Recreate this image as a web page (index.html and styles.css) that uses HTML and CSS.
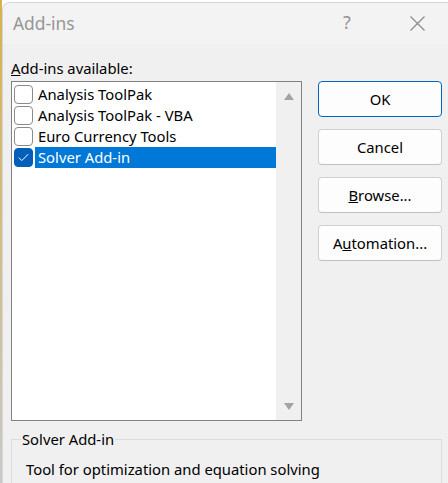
FILE: index.html
```html
<!DOCTYPE html>
<html lang="en">
<head>
    <meta charset="UTF-8">
    <meta name="viewport" content="width=device-width, initial-scale=1.0">
    <title>Add-ins</title>
    <link rel="stylesheet" href="styles.css">
</head>
<body>
    <div class="sheet-strip"></div>
    <div class="dialog">
        <div class="titlebar">
            <span class="title">Add-ins</span>
            <span class="caption-btn help">?</span>
            <span class="caption-btn close">
                <svg width="15" height="15" viewBox="0 0 15 15">
                    <path d="M0.5 0.5 L14.5 14.5 M14.5 0.5 L0.5 14.5" stroke="#8a8a8a" stroke-width="1.2" fill="none"/>
                </svg>
            </span>
        </div>

        <div class="content">
            <div class="main-row">
                <div class="list-column">
                    <label class="list-label"><u>A</u>dd-ins available:</label>
                    <div class="listbox">
                        <ul class="items">
                            <li class="item">
                                <span class="checkbox"></span>
                                <span class="item-text">Analysis ToolPak</span>
                            </li>
                            <li class="item">
                                <span class="checkbox"></span>
                                <span class="item-text">Analysis ToolPak - VBA</span>
                            </li>
                            <li class="item">
                                <span class="checkbox"></span>
                                <span class="item-text">Euro Currency Tools</span>
                            </li>
                            <li class="item selected">
                                <span class="checkbox checked">
                                    <svg width="11" height="9" viewBox="0 0 11 9">
                                        <path d="M0.8 4.6 L3.8 7.6 L10.2 1.2" stroke="#ffffff" stroke-width="1" fill="none"/>
                                    </svg>
                                </span>
                                <span class="item-text">Solver Add-in</span>
                            </li>
                        </ul>
                        <div class="scrollbar">
                            <span class="arrow up"></span>
                            <span class="arrow down"></span>
                        </div>
                    </div>
                </div>

                <div class="buttons">
                    <button class="btn default">OK</button>
                    <button class="btn">Cancel</button>
                    <button class="btn"><u>B</u>rowse...</button>
                    <button class="btn">A<u>u</u>tomation...</button>
                </div>
            </div>

            <fieldset class="groupbox">
                <legend>Solver Add-in</legend>
                <p class="description">Tool for optimization and equation solving</p>
            </fieldset>
        </div>
    </div>
</body>
</html>
```

FILE: styles.css
```css
body {
    margin: 0;
    height: 483px;
    overflow: hidden;
    font-family: "Noto Sans", "Open Sans", sans-serif;
    background: #ffffff;
    position: relative;
}

.sheet-strip {
    position: absolute;
    left: 0;
    top: 0;
    width: 2px;
    height: 483px;
    background: linear-gradient(to bottom, #d8b24a, #c9c9c9);
}

.dialog {
    margin: 2px 0 0 2px;
    width: 452px;
    height: 500px;
    background-color: #f0f0f0;
    border-radius: 8px 0 0 0;
    border-left: 1px solid #d6d6d6;
    border-top: 1px solid #d6d6d6;
    box-sizing: border-box;
    overflow: hidden;
}

.titlebar {
    height: 41px;
    background-color: #f3f3f3;
    display: flex;
    align-items: center;
    padding-left: 10px;
}

.title {
    flex: 1;
    font-size: 17.4px;
    color: #969696;
    padding-bottom: 2px;
}

.caption-btn {
    width: 58px;
    display: flex;
    justify-content: center;
    align-items: center;
    color: #969696;
}

.help {
    font-size: 18px;
    margin-right: 12px;
    padding-bottom: 3px;
}

.close {
    margin-right: 8px;
}

.content {
    padding: 0 0 0 8px;
}

.main-row {
    display: flex;
    gap: 16px;
}

.list-column {
    width: 291px;
}

.list-label {
    display: block;
    font-size: 14.8px;
    color: #000;
    height: 37px;
    line-height: 20px;
    padding-top: 14px;
    box-sizing: border-box;
}

.listbox {
    height: 340px;
    border: 1px solid #828282;
    background: #ffffff;
    box-sizing: border-box;
    display: flex;
}

.items {
    list-style: none;
    margin: 0;
    padding: 2px 0 0 2px;
    flex: 1;
}

.item {
    height: 21px;
    display: flex;
    align-items: center;
    font-size: 14.8px;
    color: #000;
}

.checkbox {
    width: 17px;
    height: 17px;
    border: 1px solid #8a8a8a;
    border-radius: 4px;
    background: #ffffff;
    display: flex;
    justify-content: center;
    align-items: center;
    flex-shrink: 0;
}

.checkbox.checked {
    background: #005fb8;
    border-color: #005fb8;
}

.item-text {
    margin-left: 2px;
    padding-left: 3px;
    height: 21px;
    line-height: 21px;
    flex: 1;
}

.selected .item-text {
    background: #0078d7;
    color: #ffffff;
}

.scrollbar {
    width: 25px;
    background: #f0f0f0;
    display: flex;
    flex-direction: column;
    justify-content: space-between;
    align-items: center;
    padding: 11px 0 10px;
    box-sizing: border-box;
}

.arrow {
    width: 0;
    height: 0;
    border-left: 5px solid transparent;
    border-right: 5px solid transparent;
}

.arrow.up {
    border-bottom: 7px solid #a3a3a3;
}

.arrow.down {
    border-top: 7px solid #a3a3a3;
}

.buttons {
    width: 124px;
    padding-top: 37px;
    display: flex;
    flex-direction: column;
    gap: 12px;
}

.btn {
    height: 36px;
    font-family: inherit;
    font-size: 14.8px;
    color: #000;
    background: #fdfdfd;
    border: 1px solid #d0d0d0;
    border-bottom-color: #c0c0c0;
    border-radius: 4px;
    padding: 0;
}

.btn.default {
    border-color: #0067c0;
}

.groupbox {
    margin: 8px 0 0 0;
    width: 431px;
    height: 100px;
    border: 1px solid #dcdcdc;
    padding: 0 0 0 14px;
    box-sizing: border-box;
}

.groupbox legend {
    font-size: 14.8px;
    padding: 0 1px;
    margin-left: -5px;
    color: #000;
}

.description {
    margin: 10px 0 0 0;
    font-size: 14.8px;
    color: #000;
}
```
